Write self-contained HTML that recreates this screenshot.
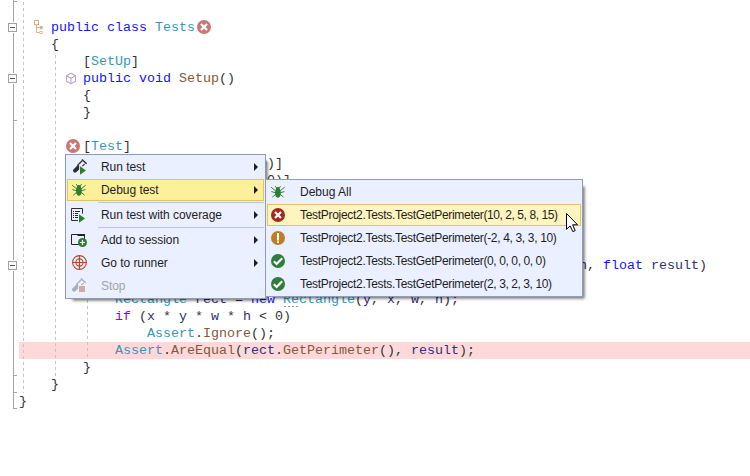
<!DOCTYPE html>
<html>
<head>
<meta charset="utf-8">
<title>Tests</title>
<style>
html,body{margin:0;padding:0;}
body{width:750px;height:476px;position:relative;overflow:hidden;background:#fff;font-family:"Liberation Sans",sans-serif;}
#code{position:absolute;left:0;top:0;width:750px;height:476px;font-family:"Liberation Mono",monospace;font-size:13.33px;color:#333;}
.ln{position:absolute;left:19px;height:17px;line-height:17px;white-space:pre;transform:scaleY(0.9);transform-origin:0 12px;}
.k{color:#1414ff;}
.t{color:#3797b4;}
.m{color:#85583a;}
.c{color:#8f08c4;}
.v{color:#30307a;}
.hl{position:absolute;left:19px;top:342px;width:731px;height:17px;background:#ffd9d9;}
.vline{position:absolute;left:13px;top:0;width:1px;height:409px;background:#a5a5a5;}
.tick{position:absolute;left:13px;width:4px;height:1px;background:#a5a5a5;}
.fold{position:absolute;left:8px;width:7px;height:7px;border:1px solid #a0a0a0;background:#fff;box-shadow:0 1px 0 #fff,0 -1px 0 #fff;}
.fold:after{content:"";position:absolute;left:1px;top:3px;width:5px;height:1px;background:#555;}
.guide{position:absolute;width:1px;background:repeating-linear-gradient(to bottom,#c4c4c4 0,#c4c4c4 3px,transparent 3px,transparent 6px);}
.menu{position:absolute;background:#eaf0ff;border:1px solid #8e9bbc;box-shadow:4.3px 4.3px 3px -2.5px rgba(0,0,0,.58);box-sizing:border-box;font-size:12px;color:#1e1e1e;}
.mi{position:absolute;left:1px;height:22px;line-height:22px;white-space:nowrap;box-sizing:border-box;}
.mi .tx{position:absolute;top:0;}
.mi.sel{background:#fef09b;border:1px solid #e5c365;}
.mi.sel .tx{top:-1px;margin-left:-1px;}
.mi.sel2{background:#fdf4bf;border:1px solid #e5c365;}
.mi.sel2 .tx{top:-1px;margin-left:-1px;}
.mi.dis{color:#a2a4a5;}
.sep{position:absolute;height:1px;background:#bec6da;}
.arr{position:absolute;width:0;height:0;border-left:4px solid #1e1e1e;border-top:4px solid transparent;border-bottom:4px solid transparent;}
svg{position:absolute;left:0;top:0;overflow:visible;}
</style>
</head>
<body>
<div id="code">
<div class="hl"></div>
<div class="guide" style="left:23px;top:2px;height:391px"></div>
<div class="guide" style="left:55px;top:55px;height:321px"></div>
<div class="guide" style="left:87px;top:294px;height:63px"></div>
<div style="position:absolute;left:284px;top:306px;width:14px;height:1px;background:repeating-linear-gradient(to right,#9a9a9a 0,#9a9a9a 2px,transparent 2px,transparent 4px)"></div>
<div class="vline"></div>
<div class="tick" style="top:1px"></div>
<div class="tick" style="top:120px"></div>
<div class="tick" style="top:375px"></div>
<div class="tick" style="top:392px"></div>
<div class="tick" style="top:408px"></div>
<div class="fold" style="top:23px"></div>
<div class="fold" style="top:74px"></div>
<div class="fold" style="top:261px"></div>

<div class="ln" style="top:19px">    <span class="k">public</span> <span class="k">class</span> <span class="t">Tests</span></div>
<div class="ln" style="top:36px">    {</div>
<div class="ln" style="top:53px">        [<span class="t">SetUp</span>]</div>
<div class="ln" style="top:70px">        <span class="k">public</span> <span class="k">void</span> <span class="m">Setup</span>()</div>
<div class="ln" style="top:87px">        {</div>
<div class="ln" style="top:104px">        }</div>
<div class="ln" style="top:138px">        [<span class="t">Test</span>]</div>
<div class="ln" style="top:155px">        [<span class="t">TestCase</span>(0, 0, 0, 0, 0)]</div>
<div class="ln" style="top:172px">        [<span class="t">TestCase</span>(2, 3, 2, 3, 10)]</div>
<div class="ln" style="top:257px">        <span class="k">public</span> <span class="k">void</span> <span class="m">TestGetPerimeter</span>(<span class="k">float</span> <span class="v">x</span>, <span class="k">float</span> <span class="v">y</span>, <span class="k">float</span> <span class="v">w</span>, <span class="k">float</span> <span class="v">h</span>, <span class="k">float</span> <span class="v">result</span>)</div>
<div class="ln" style="top:274px">        {</div>
<div class="ln" style="top:291px">            <span class="t">Rectangle</span> <span class="v">rect</span> = <span class="k">new</span> <span class="t">Rectangle</span>(<span class="v">y</span>, <span class="v">x</span>, <span class="v">w</span>, <span class="v">h</span>);</div>
<div class="ln" style="top:308px">            <span class="c">if</span> (<span class="v">x</span> * <span class="v">y</span> * <span class="v">w</span> * <span class="v">h</span> &lt; 0)</div>
<div class="ln" style="top:325px">                <span class="t">Assert</span>.<span class="m">Ignore</span>();</div>
<div class="ln" style="top:342px">            <span class="t">Assert</span>.<span class="m">AreEqual</span>(<span class="v">rect</span>.<span class="m">GetPerimeter</span>(), <span class="v">result</span>);</div>
<div class="ln" style="top:359px">        }</div>
<div class="ln" style="top:376px">    }</div>
<div class="ln" style="top:393px">}</div>
</div>

<!-- first level menu : x 65..265, y 154..298 -->
<div class="menu" id="m1" style="left:65px;top:154px;width:201px;height:145px;letter-spacing:-0.05px;">
  <div class="mi" style="top:1px;width:197px"><span class="tx" style="left:34px">Run test</span></div>
  <div class="mi sel" style="top:24px;width:197px"><span class="tx" style="left:34px">Debug test</span></div>
  <div class="sep" style="left:32px;top:47px;width:166px"></div>
  <div class="mi" style="top:49px;width:197px"><span class="tx" style="left:34px">Run test with coverage</span></div>
  <div class="sep" style="left:32px;top:72px;width:166px"></div>
  <div class="mi" style="top:74px;width:197px"><span class="tx" style="left:34px">Add to session</span></div>
  <div class="mi" style="top:97px;width:197px"><span class="tx" style="left:34px">Go to runner</span></div>
  <div class="mi dis" style="top:120px;width:197px"><span class="tx" style="left:34px">Stop</span></div>
  <div class="arr" style="left:188px;top:8px"></div>
  <div class="arr" style="left:188px;top:31px"></div>
  <div class="arr" style="left:188px;top:56px"></div>
  <div class="arr" style="left:188px;top:81px"></div>
  <div class="arr" style="left:188px;top:104px"></div>
</div>

<!-- second level menu : x 265..582, y 179..296 -->
<div class="menu" id="m2" style="left:265px;top:179px;width:318px;height:118px;">
  <div class="mi" style="top:1px;width:314px"><span class="tx" style="left:33px">Debug All</span></div>
  <div class="mi sel2" style="top:24px;width:314px"><span class="tx" style="left:33px"><span style="letter-spacing:-0.302px">TestProject2.Tests.TestGetPerimeter</span><span style="letter-spacing:-0.435px">(10, 2, 5, 8, 15)</span></span></div>
  <div class="mi" style="top:47px;width:314px"><span class="tx" style="left:33px"><span style="letter-spacing:-0.302px">TestProject2.Tests.TestGetPerimeter</span><span style="letter-spacing:-0.335px">(-2, 4, 3, 3, 10)</span></span></div>
  <div class="mi" style="top:70px;width:314px"><span class="tx" style="left:33px"><span style="letter-spacing:-0.302px">TestProject2.Tests.TestGetPerimeter</span><span style="letter-spacing:-0.403px">(0, 0, 0, 0, 0)</span></span></div>
  <div class="mi" style="top:93px;width:314px"><span class="tx" style="left:33px"><span style="letter-spacing:-0.302px">TestProject2.Tests.TestGetPerimeter</span><span style="letter-spacing:-0.420px">(2, 3, 2, 3, 10)</span></span></div>
</div>

<svg id="icons" width="750" height="476" viewBox="0 0 750 476">
  <!-- class icon -->
  <g fill="none" stroke="#dcb083" stroke-width="1">
    <rect x="34.5" y="20.5" width="4" height="4"/>
    <path d="M36.5 25v7.5h3M36.5 27.5h3"/>
    <rect x="39.5" y="31.5" width="3" height="2" rx="0.8"/>
  </g>
  <rect x="39.5" y="26" width="3.3" height="3.3" rx="1.2" fill="#dcb083"/>
  <!-- error badges in code -->
  <g id="eb1">
    <circle cx="204" cy="27" r="7" fill="#ca7673"/>
    <path d="M201 24l6 6M207 24l-6 6" stroke="#fff" stroke-width="2.2" fill="none"/>
  </g>
  <g id="eb2">
    <circle cx="73" cy="146" r="7" fill="#ca7673"/>
    <path d="M70 143l6 6M76 143l-6 6" stroke="#fff" stroke-width="2.2" fill="none"/>
  </g>
  <!-- method cube -->
  <g fill="none" stroke="#bba3d3" stroke-width="1.1" stroke-linejoin="round">
    <path d="M71 73.3L75.5 75.7V81.2L71 83.7L66.5 81.2V75.7Z"/>
    <path d="M66.5 75.7L71 78.2L75.5 75.7M71 78.2V83.7"/>
  </g>
  <!-- run test icon -->
  <g id="run">
    <path d="M77.6 165.3L73.4 169.5A2 2 0 0 0 76.2 172.3L79.1 169.4V165.3Z" fill="#2d2d2d"/>
    <path d="M77.3 165.6L82.1 160.8" stroke="#2d2d2d" stroke-width="1.3" fill="none"/>
    <path d="M81.9 159.4L86.6 163.7" stroke="#2d2d2d" stroke-width="1.4" fill="none"/>
    <path d="M84.7 163.8L82.4 166.1" stroke="#2d2d2d" stroke-width="1.1" fill="none"/>
    <path d="M80 166.2V174.8L86 170.5Z" fill="#2f7d32"/>
  </g>
  <!-- bug icons -->
  <g id="bug1" transform="translate(78.9 190.5)">
    <path d="M0 -5.4C1.6 -5.4 2 -4.6 2 -3.4C2.9 -2 2.9 0 2.8 1.5C2.6 3.8 1.5 5.2 0 5.2C-1.5 5.2 -2.6 3.8 -2.8 1.5C-2.9 0 -2.9 -2 -2 -3.4C-2 -4.6 -1.6 -5.4 0 -5.4Z" fill="#2f7d32"/>
    <path d="M-2.6 -6.4L-1.5 -4.6M2.6 -6.4L1.5 -4.6M-6.8 -5.3L-2.2 -1.6M6.8 -5.3L2.2 -1.6M-6.6 -0.9L-2 0.3M6.6 -0.9L2 0.3M-5.6 4.6L-1.8 1.5M5.6 4.6L1.8 1.5" stroke="#2f7d32" stroke-width="0.95" fill="none"/>
  </g>
  <g id="bug2" transform="translate(277.9 192.5)">
    <path d="M0 -5.4C1.6 -5.4 2 -4.6 2 -3.4C2.9 -2 2.9 0 2.8 1.5C2.6 3.8 1.5 5.2 0 5.2C-1.5 5.2 -2.6 3.8 -2.8 1.5C-2.9 0 -2.9 -2 -2 -3.4C-2 -4.6 -1.6 -5.4 0 -5.4Z" fill="#2f7d32"/>
    <path d="M-2.6 -6.4L-1.5 -4.6M2.6 -6.4L1.5 -4.6M-6.8 -5.3L-2.2 -1.6M6.8 -5.3L2.2 -1.6M-6.6 -0.9L-2 0.3M6.6 -0.9L2 0.3M-5.6 4.6L-1.8 1.5M5.6 4.6L1.8 1.5" stroke="#2f7d32" stroke-width="0.95" fill="none"/>
  </g>
  <!-- coverage icon -->
  <g id="cov">
    <path d="M82.5 213.6V208.5H71.5V220.5H78" stroke="#2d2d2d" stroke-width="1" fill="none"/>
    <path d="M73 211.5h1M73 213.5h1M73 215.5h1M73 217.5h1M75 211.5h5M75 213.5h3M75 215.5h3M75 217.5h3" stroke="#2d2d2d" stroke-width="1" fill="none"/>
    <path d="M79 214.2V222.8L85 218.5Z" fill="#2f7d32"/>
  </g>
  <!-- add to session -->
  <g id="add">
    <path d="M71.5 234.5H84.5V244.5H71.5Z" stroke="#222" stroke-width="1" fill="none"/>
    <path d="M77.5 234h7.5v2h-7.5z" fill="#222"/>
    <circle cx="82.5" cy="242.5" r="4.5" fill="#2f7d32"/>
    <path d="M80 242.5h5M82.5 240v5" stroke="#fff" stroke-width="1.2" fill="none"/>
  </g>
  <!-- go to runner -->
  <g id="tgt" fill="none" stroke="#b8452c" stroke-width="1.1">
    <circle cx="79.5" cy="262.5" r="6.9"/>
    <circle cx="79.5" cy="262.5" r="3.6"/>
    <path d="M79.5 255V270M72 262.5H87"/>
  </g>
  <!-- stop icon -->
  <g id="stop">
    <path d="M76.6 284.3L72.4 288.5A2 2 0 0 0 75.2 291.3L78.1 288.4V284.3Z" fill="#a9aeb9"/>
    <path d="M76.3 284.6L81.1 279.8" stroke="#a9aeb9" stroke-width="1.3" fill="none"/>
    <path d="M80.9 278.4L85.6 282.7" stroke="#a9aeb9" stroke-width="1.4" fill="none"/>
    <path d="M83.7 282.8L81.4 285.1" stroke="#a9aeb9" stroke-width="1.1" fill="none"/>
    <rect x="79" y="286" width="6" height="6" fill="#d4a6a6"/>
  </g>
  <!-- status icons -->
  <g id="st1">
    <circle cx="278" cy="215" r="7" fill="#a5281c"/>
    <path d="M275 212l6 6M281 212l-6 6" stroke="#fff" stroke-width="2.2" fill="none"/>
  </g>
  <g id="st2">
    <circle cx="278" cy="238" r="7" fill="#c17d22"/>
    <path d="M277 233h2v7.5h-2zM277 241.2h2v1.8h-2z" fill="#fff"/>
  </g>
  <g id="st3">
    <circle cx="278" cy="261" r="7" fill="#2f7d3a"/>
    <path d="M273.8 261.2L276.6 264L282.2 258.3" stroke="#fff" stroke-width="2.2" fill="none"/>
  </g>
  <g id="st4">
    <circle cx="278" cy="284" r="7" fill="#2f7d3a"/>
    <path d="M273.8 284.2L276.6 287L282.2 281.3" stroke="#fff" stroke-width="2.2" fill="none"/>
  </g>
  <!-- mouse cursor -->
  <g id="cur">
    <path d="M566.5 213.5V229.3L570.1 225.9L572.8 231.6L575.2 230.6L572.6 224.8H577.6Z" fill="#fff" stroke="#000" stroke-width="1" stroke-linejoin="miter"/>
  </g>
</svg>
</body>
</html>
